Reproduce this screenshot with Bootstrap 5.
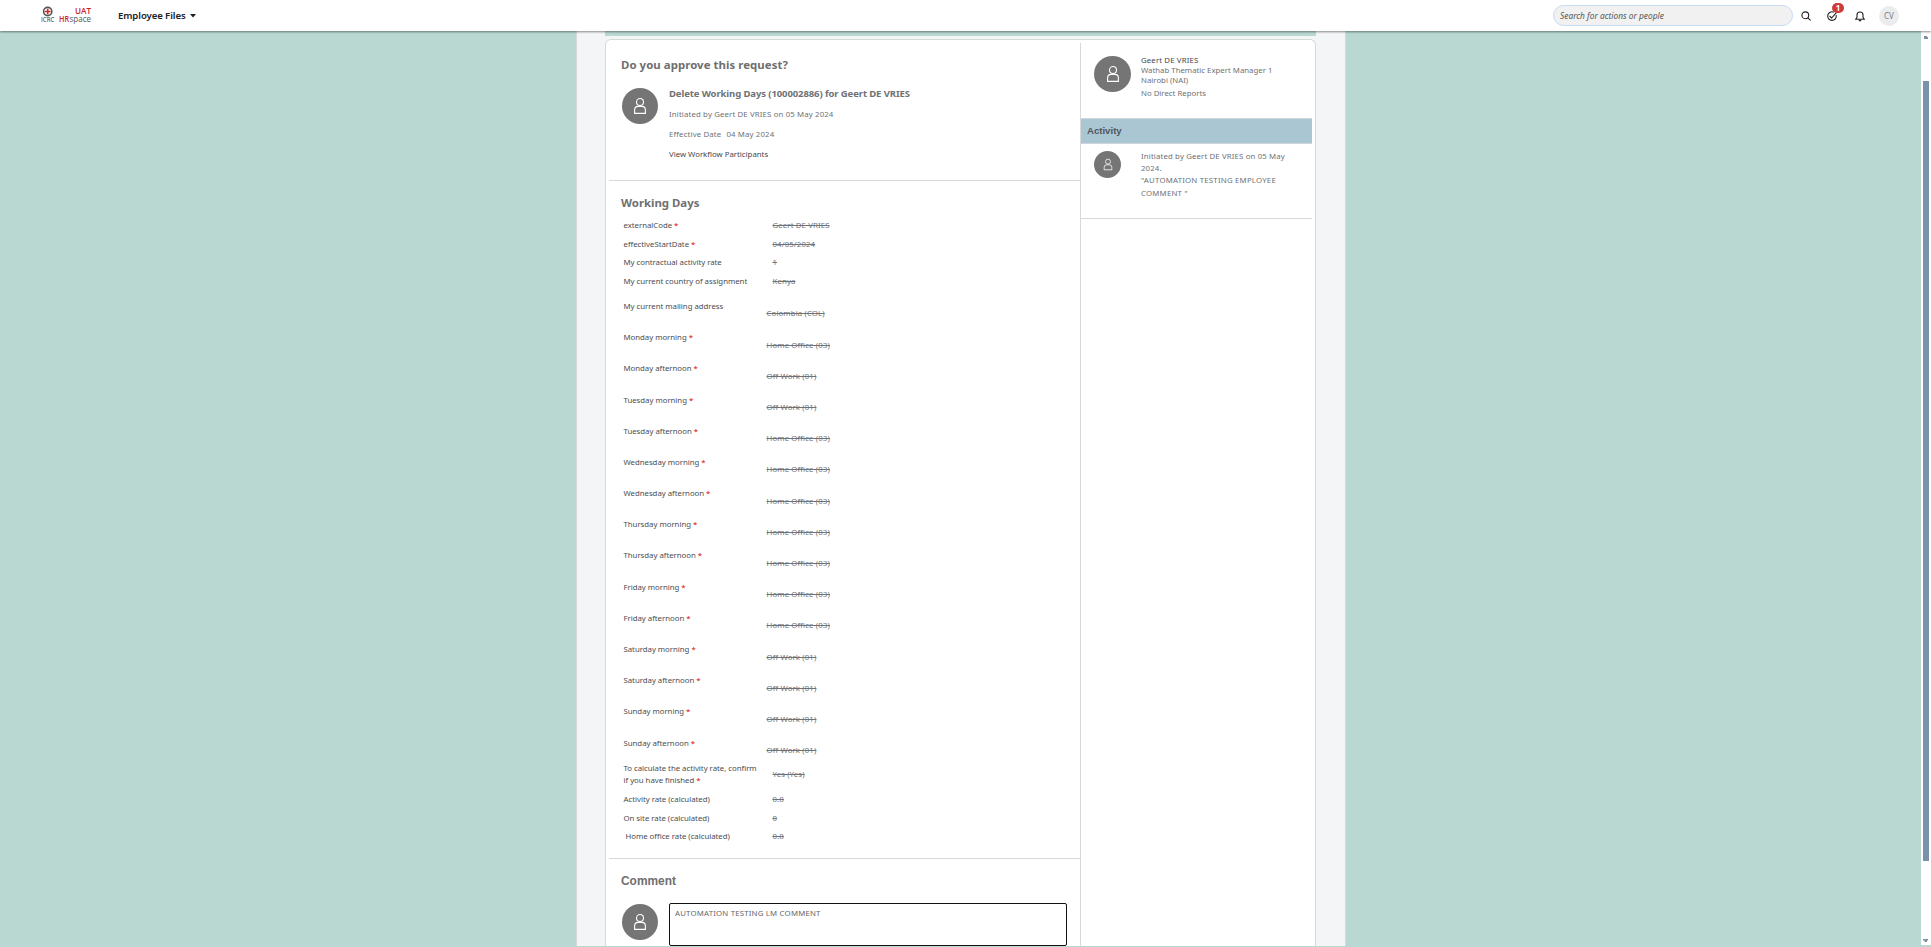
<!DOCTYPE html>
<html lang="en">
<head>
<meta charset="utf-8">
<title>Employee Files</title>
<link href="https://cdn.jsdelivr.net/npm/bootstrap@5.3.0/dist/css/bootstrap.min.css" rel="stylesheet">
<style>
body{font-family:"Noto Sans","Open Sans",sans-serif;font-size:7.8px;line-height:12px;color:#6f7276;background:#b8d8d1;height:947px;overflow:hidden}
.topbar{height:31px;background:#fff;box-shadow:0 1px 2px rgba(0,0,0,.45);z-index:5;padding:0 32px 0 41px}
.logo{width:52px;height:31px;margin-right:25px}
.menu-title{font-size:9.6px;font-weight:600;color:#1d2126;letter-spacing:-.1px}
.menu-title svg{margin-left:4px}
.search-box{width:240px;height:21px;border:1px solid #c5dbf5;border-radius:11px;background:#f1f1f1;font-size:8.37px;font-style:italic;color:#555;padding-left:6px}
.tool{width:12px;height:12px}
.count{left:6px;top:-7px;width:12px;height:10px;border-radius:5px;background:#cf3a3a;color:#fff;font-size:8px;font-weight:700;line-height:10px}
.initials{width:20px;height:20px;background:#eaecee;color:#7a7f85;font-size:8px}
.stage{height:915px}
.panel{width:770px;margin-left:576px;background:#f4f5f7;border:solid #d5d9d9;border-width:0 1px;padding:0 29px 0 28px}
.strip{height:5px;background:#b8d8d1}
.sheet{width:711px;height:907px;margin-top:3px;border:1px solid #d9d9d9;border-bottom:0;border-radius:6px 6px 0 0;background:#fff;padding:3px 3px 0}
.main-col{width:471px}
.side-col{width:232px;border-left:1px solid #d9d9d9}
.sect{border-bottom:1px solid #d9d9d9;padding-left:12px}
.heading{font-size:11.4px;font-weight:700;line-height:20px;color:#6f6f6f;margin:0}
.grotesk{font-family:"Liberation Sans",sans-serif;font-size:11.93px}
.avatar{width:36px;height:36px;background:#757575;flex:none}
.avatar svg{width:14px;height:18px}
.avatar-sm{width:27px;height:27px}
.avatar-sm svg{width:10px;height:13px}
.req-title{font-size:9.5px;font-weight:700;line-height:14px;letter-spacing:-.1px}
.by-line{letter-spacing:.14px}
.field{display:grid;grid-template-columns:149px 1fr;align-items:center;height:18.7px;color:#4b4d50;letter-spacing:-.02px}
.field del{color:#6f7276;letter-spacing:.12px}
.field.tall{height:31.2px;grid-template-columns:143px 1fr}
.field.tall del{padding-top:15px;line-height:12px}
.req{color:#d00}
.note{width:398px;height:43px;border:1px solid #111;border-radius:2px;letter-spacing:.2px;padding:3px 5px;color:#65686b}
.act-head{height:26px;background:#a9c6d2;border:solid #cfd6d9;border-width:1px 0;font-size:9.6px;font-weight:700;color:#52555b;font-family:"Liberation Sans",sans-serif;padding-left:6px}
.track{width:10px;background:#fff;padding:3px 2px 3px}
.thumb{width:6px;height:780px;background:#7b91a9;margin-top:42px}
</style>
<script src="https://cdn.jsdelivr.net/npm/bootstrap@5.3.0/dist/js/bootstrap.bundle.min.js"></script>
</head>
<body>
<svg class="d-none"><symbol id="person" viewBox="0 0 14 18"><g fill="none" stroke="#fff" stroke-width="1.1"><circle cx="7" cy="5" r="3.5"/><path d="M1.6 16.4V13q0-3.6 3.6-3.6h3.6q3.6 0 3.6 3.6v3.4z"/></g></symbol></svg>
<header class="topbar d-flex align-items-center position-relative">
  <svg class="logo" viewBox="0 0 52 31">
    <circle cx="6.700" cy="11.500" r="4.100" fill="#fff" stroke="#555" stroke-width="1.6"/>
    <path d="M6.700 8.700v5.600M3.900 11.500h5.600" stroke="#d22" stroke-width="1.6"/>
    <text x="0" y="22.2" font-family="Open Sans" font-size="6.5" textLength="13.500" lengthAdjust="spacingAndGlyphs" fill="#333">ICRC</text>
    <text x="34" y="14" font-family="Open Sans" font-size="8" font-weight="600" textLength="16" lengthAdjust="spacingAndGlyphs" fill="#cc2229">UAT</text>
    <text x="18" y="22" font-family="Open Sans" font-size="8.2" font-weight="600" textLength="10" lengthAdjust="spacingAndGlyphs" fill="#cc2229">HR</text>
    <text x="28.5" y="22" font-family="Open Sans" font-size="8.2" textLength="21.5" lengthAdjust="spacingAndGlyphs" fill="#555">space</text>
  </svg>
  <div class="menu-title">Employee Files<svg width="6" height="4" viewBox="0 0 6 4"><path d="M0 0h6L3 3.400z" fill="#1d2126"/></svg></div>
  <div class="d-flex align-items-center ms-auto">
    <div class="search-box d-flex align-items-center">Search for actions or people</div>
    <svg class="tool" style="margin-left:7px" viewBox="0 0 12 12" fill="none" stroke="#222" stroke-width="1.1"><circle cx="5.3" cy="5.3" r="3.4"/><path d="M7.8 7.8l2.8 2.6"/></svg>
    <div class="position-relative d-flex" style="margin-left:14px">
      <svg class="tool" viewBox="0 0 12 12" fill="none" stroke="#222" stroke-width="1.1"><path d="M10.200 5.200A4.300 4.300 0 1 1 7.800 2.200M3.600 6l2 2L10.400 2.600"/></svg>
      <span class="count position-absolute text-center">1</span>
    </div>
    <svg class="tool" style="margin-left:16px" viewBox="0 0 12 12" fill="none" stroke="#222" stroke-width="1.1"><path d="M1.800 9.200h8.400L9 7.400V5a3 3 0 0 0-6 0v2.400zM4.800 10.600h2.400"/></svg>
    <div class="initials rounded-circle d-flex align-items-center justify-content-center" style="margin-left:13px">CV</div>
  </div>
</header>
<div class="stage d-flex">
  <div class="panel">
    <div class="strip"></div>
    <div class="sheet d-flex">
      <main class="main-col">
        <section class="sect" style="height:138px;padding-top:12px">
          <h2 class="heading" style="letter-spacing:.06px">Do you approve this request?</h2>
          <div class="d-flex" style="padding:11px 0 0 1px;gap:11px">
            <div class="avatar rounded-circle d-flex align-items-center justify-content-center" style="margin-top:2px"><svg><use href="#person"/></svg></div>
            <div>
              <div class="req-title" style="margin-top:1px">Delete Working Days (100002886) for Geert DE VRIES</div>
              <div class="by-line" style="margin-top:7px">Initiated by Geert DE VRIES on 05 May 2024</div>
              <div class="by-line" style="margin-top:8px">Effective Date <span style="margin-left:3px">04 May 2024</span></div>
              <div style="margin-top:8px;color:#45484b">View Workflow Participants</div>
            </div>
          </div>
        </section>
        <section class="sect" style="height:678px;padding-top:12px">
          <h2 class="heading">Working Days</h2>
          <div id="fields" style="padding:2.600px 0 0 2.500px"></div>
        </section>
        <section style="padding:12px 0 0 12px">
          <h2 class="heading grotesk">Comment</h2>
          <div class="d-flex" style="padding:12px 0 0 1px;gap:11px">
            <div class="avatar rounded-circle d-flex align-items-center justify-content-center" style="margin-top:1px"><svg><use href="#person"/></svg></div>
            <div class="note">AUTOMATION TESTING LM COMMENT</div>
          </div>
        </section>
      </main>
      <aside class="side-col">
        <div class="d-flex" style="height:75px;padding:13px 0 0 13px;gap:10px">
          <div class="avatar rounded-circle d-flex align-items-center justify-content-center" style="width:37px"><svg><use href="#person"/></svg></div>
          <div style="line-height:10px;margin-top:-1px">
            <div class="by-line" style="color:#45484b">Geert DE VRIES</div>
            <div>Wathab Thematic Expert Manager 1</div>
            <div>Nairobi (NAI)</div>
            <div style="margin-top:3px">No Direct Reports</div>
          </div>
        </div>
        <div class="act-head d-flex align-items-center">Activity</div>
        <div class="d-flex" style="height:75px;border-bottom:1px solid #d9d9d9;padding:7px 0 0 13px;gap:20px">
          <div class="avatar avatar-sm rounded-circle d-flex align-items-center justify-content-center"><svg><use href="#person"/></svg></div>
          <div class="by-line" style="width:165px">
            <div style="margin-top:-1px">Initiated by Geert DE VRIES on 05 May<br>2024.</div>
            <div style="line-height:13px;letter-spacing:.22px">"AUTOMATION TESTING EMPLOYEE<br>COMMENT "</div>
          </div>
        </div>
      </aside>
    </div>
  </div>
  <div class="track ms-auto" style="height:914px">
    <svg class="d-block" width="6" height="4" viewBox="0 0 6 4" style="margin-top:1px"><path d="M1 2V1h3v1h1v2H1z" fill="#7b91a9"/></svg>
    <div class="thumb"></div>
    <svg class="d-block" width="6" height="4" viewBox="0 0 6 4" style="margin-top:78px"><path d="M0 0h5v1.600H4V3H1.600V1.600H0z" fill="#7b91a9"/></svg>
  </div>
</div>
<script>
const home='Home Office (03)', off='Off Work (01)';
const days=[['Monday',home,off],['Tuesday',off,home],['Wednesday',home,home],['Thursday',home,home],['Friday',home,home],['Saturday',off,off],['Sunday',off,off]];
const rows=[['externalCode*','Geert DE VRIES'],['effectiveStartDate*','04/05/2024'],['My contractual activity rate','1'],['My current country of assignment','Kenya'],['My current mailing address','Colombia (COL)','tall']];
for(const [d,am,pm] of days) rows.push([d+' morning*',am,'tall'],[d+' afternoon*',pm,'tall']);
rows.push(['To calculate the activity rate, confirm<br>if you have finished*','Yes (Yes)','double'],['Activity rate (calculated)','0.8'],['On site rate (calculated)','0'],['&nbsp;Home office rate (calculated)','0.8']);
document.getElementById('fields').innerHTML=rows.map(([l,v,k=''])=>`<div class="field ${k}"${k=='double'?' style="height:31.4px"':''}><span>${l.replace('*',' <span class="req">*</span>')}</span><span><del${k=='tall'?' class="d-inline-block"':''}>${v}</del></span></div>`).join('');
</script>
</body>
</html>
